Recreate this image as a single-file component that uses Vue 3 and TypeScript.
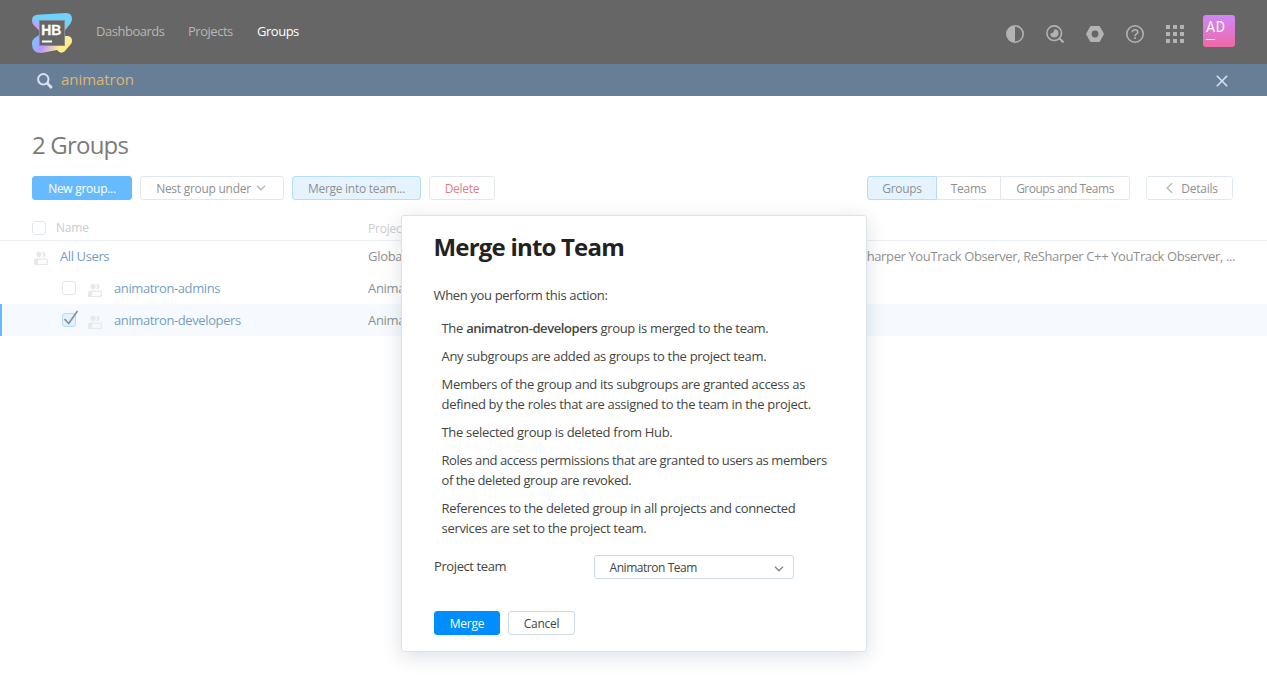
<script setup lang="ts">
interface Row { name: string; project: string; level: number; checked: boolean; roles?: string }

const nav: { label: string; active: boolean }[] = [
  { label: 'Dashboards', active: false },
  { label: 'Projects', active: false },
  { label: 'Groups', active: true },
]
const rows: Row[] = [
  { name: 'All Users', project: 'Global', level: 0, checked: false, roles: 'ReSharper YouTrack Observer, ReSharper C++ YouTrack Observer, ...' },
  { name: 'animatron-admins', project: 'Animatron', level: 1, checked: false },
  { name: 'animatron-developers', project: 'Animatron', level: 1, checked: true },
]
const effects: string[] = [
  'Any subgroups are added as groups to the project team.',
  'Members of the group and its subgroups are granted access as defined by the roles that are assigned to the team in the project.',
  'The selected group is deleted from Hub.',
  'Roles and access permissions that are granted to users as members of the deleted group are revoked.',
  'References to the deleted group in all projects and connected services are set to the project team.',
]
const dots = [0, 7, 14]
</script>

<template>
  <div class="page">
    <header class="header">
      <svg class="logo" width="40" height="40" viewBox="0 0 40 40">
        <defs>
          <linearGradient id="top" x1="0" y1="0.8" x2="0.35" y2="0.2">
            <stop offset="0.1" stop-color="#b04dff" /><stop offset="0.8" stop-color="#0fb4f5" />
          </linearGradient>
          <linearGradient id="bottom" x1="0" y1="0.2" x2="1" y2="0.4">
            <stop offset="0" stop-color="#10a8ff" /><stop offset="0.34" stop-color="#9050ff" /><stop offset="0.75" stop-color="#ffe040" />
          </linearGradient>
        </defs>
        <path d="M5 1.700 L34 0 Q40 0 40 6 Q40 8.500 38.500 10.500 L32 18.500 H8 L1.500 12 Q0 10 0 7 Q0 2.500 5 1.700Z" fill="url(#top)" />
        <path d="M7 22 L8 21 V30 H32 V23 H35 Q40 23 40 28 Q40 30 38.500 31.500 L32.500 38.500 Q29 41 26 38 L25 37 L9 40 Q0 40 0 31 Q0 27 2.500 25Z" fill="url(#bottom)" />
        <rect x="7.500" y="7.500" width="25" height="25" class="logo-box" />
        <rect x="10" y="27.500" width="10" height="2" fill="#fff" />
        <text x="9.300" y="21.500" class="logo-text" textLength="20" lengthAdjust="spacingAndGlyphs">HB</text>
      </svg>
      <nav class="nav">
        <a v-for="n in nav" :key="n.label" :class="['nav-item', n.label.toLowerCase(), { active: n.active }]">{{ n.label }}</a>
      </nav>
      <div class="tools">
        <svg width="18" height="18" viewBox="0 0 18 18"><circle cx="9" cy="9" r="8.200" class="line" /><path d="M9 1a8 8 0 0 0 0 16z" class="solid" /></svg>
        <svg width="18" height="18" viewBox="0 0 18 18"><circle cx="8.200" cy="8.200" r="7.300" class="line" /><path d="M13.300 13.300l4.200 4.200" class="line thick" /><path d="M4.300 8.400c1.600 0 3.500-.3 4.200-4.200a4.100 4.100 0 1 1-4.200 4.200z" class="solid" /></svg>
        <svg width="18" height="18" viewBox="0 0 18 18"><path fill-rule="evenodd" d="M5 1h8q.6 0 .9.500l3.900 6.900q.3.600 0 1.200l-3.900 6.900q-.3.500-.9.500H5q-.6 0-.9-.5L.2 9.600q-.3-.6 0-1.200l3.900-6.900Q4.400 1 5 1zm4 4.600a3.400 3.400 0 1 0 0 6.800a3.400 3.400 0 0 0 0-6.800z" class="solid" /></svg>
        <svg width="18" height="18" viewBox="0 0 18 18"><circle cx="9" cy="9" r="8.200" class="line" /><path d="M6.300 7.200c0-3.400 5.500-3.300 5.500 0c0 1.700-2.800 1.900-2.800 4" class="line" /><path d="M8.100 12.300h1.800v1.800H8.100z" class="solid" /></svg>
        <svg width="18" height="18" viewBox="0 0 18 18"><template v-for="y in dots" :key="y"><rect v-for="x in dots" :key="x" :x="x" :y="y" width="4" height="4" class="solid" /></template></svg>
      </div>
      <div class="avatar"><span>AD</span><i></i></div>
    </header>

    <div class="search">
      <svg class="glass" width="16" height="16" viewBox="0 0 16 16"><circle cx="6.300" cy="6.300" r="5.200" /><path d="M10 10l4.800 5" /></svg>
      <span class="query">animatron</span>
      <svg class="clear" width="12" height="12" viewBox="0 0 12 12"><path d="M.8.800l10.400 10.400M11.200.800L.8 11.200" /></svg>
    </div>

    <main>
      <h1>2 Groups</h1>
      <div class="toolbar">
        <button class="btn primary new"><span>New group...</span></button>
        <button class="btn nest"><span>Nest group under</span><svg width="10" height="6" viewBox="0 0 10 6"><path d="M1 .8l4 4l4-4" /></svg></button>
        <button class="btn selected merge-into"><span>Merge into team...</span></button>
        <button class="btn delete"><span>Delete</span></button>
        <div class="segments">
          <button class="btn selected seg-groups"><span>Groups</span></button>
          <button class="btn seg-teams"><span>Teams</span></button>
          <button class="btn seg-both"><span>Groups and Teams</span></button>
        </div>
        <button class="btn details"><svg width="7" height="12" viewBox="0 0 7 12"><path d="M6 1.200l-4.800 4.800l4.800 4.800" /></svg><span>Details</span></button>
      </div>

      <div class="table">
        <div class="thead">
          <span class="check"></span><span class="th-name">Name</span><span class="th-project">Project</span>
        </div>
        <div v-for="r in rows" :key="r.name" :class="['row', { nested: r.level > 0, chosen: r.checked }]">
          <div class="name-cell">
            <span v-if="r.level > 0" :class="['check', { on: r.checked }]">
              <svg v-if="r.checked" width="17" height="16" viewBox="0 0 17 16"><path d="M1.500 9l4.200 4.500L14.500 1" /></svg>
            </span>
            <svg class="people" width="14" height="14" viewBox="0 0 14 14">
              <circle cx="5" cy="3.400" r="2.600" />
              <path d="M8.200 .9a2.600 2.600 0 1 1 0 5a4 4 0 0 0 0-5z" />
              <path fill-rule="evenodd" d="M0 14V9.500Q0 7.500 2.200 7.500H12Q14 7.500 14 9.500V14zM4 12.800H12.800V10Q12.800 8.800 11.500 8.800H6Q4 8.800 4 11z" />
            </svg>
            <a>{{ r.name }}</a>
          </div>
          <span class="project">{{ r.project }}</span>
          <span v-if="r.roles" class="roles">{{ r.roles }}</span>
        </div>
      </div>
    </main>

    <div class="overlay">
      <section class="dialog">
        <h2><span>Merge into Team</span></h2>
        <p class="intro">When you perform this action:</p>
        <ul>
          <li>The <b>animatron-developers</b> group is merged to the team.</li>
          <li v-for="e in effects" :key="e">{{ e }}</li>
        </ul>
        <div class="field">
          <label>Project team</label>
          <div class="select"><span>Animatron Team</span><svg width="10" height="6" viewBox="0 0 10 6"><path d="M1 .8l4 4l4-4" /></svg></div>
        </div>
        <div class="actions">
          <button class="btn primary ok"><span>Merge</span></button>
          <button class="btn cancel"><span>Cancel</span></button>
        </div>
      </section>
    </div>
  </div>
</template>

<style>
body { margin: 0; overflow: hidden; background: #fff; }
</style>

<style scoped>
* { box-sizing: border-box; }
.page { position: relative; width: 1267px; height: 695px; overflow: hidden; background: #fff; color: #444; font: 13px/20px "Open Sans", "Noto Sans", sans-serif; letter-spacing: -0.3px; white-space: nowrap; }
.header { display: flex; align-items: center; height: 64px; padding: 0 32px; background: #000; }
.logo { margin-top: 2px; }
.logo-box { fill: #000; stroke: #343c46; stroke-width: 1; }
.logo-text { font: bold 14.5px "Liberation Sans", sans-serif; fill: #fff; stroke: #fff; stroke-width: 0.3; letter-spacing: 0; }
.nav { display: flex; gap: 24px; margin-left: 24px; margin-top: -3px; color: #888; letter-spacing: -0.48px; }
.nav-item.dashboards { width: 68px; }
.nav-item.projects { width: 45px; }
.nav-item.active { color: #fff; }
.tools { display: flex; gap: 22px; margin: 4px 19px 0 auto; }
.solid { fill: #808080; }
.line { fill: none; stroke: #808080; stroke-width: 1.6; }
.thick { stroke-width: 2; }
.avatar { width: 32px; height: 32px; margin-top: -2px; padding: 2px 3px; border-radius: 3px; background: linear-gradient(#b037f2, #e60569); color: #fff; font: 14px/20px Roboto, sans-serif; letter-spacing: 0.7px; }
.avatar span { display: block; }
.avatar i { display: block; width: 9px; height: 1px; margin-top: 2px; background: #fff; }

.search { display: flex; align-items: center; height: 32px; padding: 0 39px 0 37px; background: #032a50; }
.glass { margin-top: 1px; fill: none; stroke: #b8d1e5; stroke-width: 2; }
.glass path { stroke-width: 2.8; }
.query { margin: -2px 0 0 8px; color: #c98614; font-size: 15px; letter-spacing: -0.05px; }
.clear { margin: 2px 0 0 auto; fill: none; stroke: #b8d1e5; stroke-width: 1.6; }

h1 { margin: 0; padding: 35px 32px 0; height: 80px; color: #222; font-size: 24px; line-height: 28px; font-weight: 400; letter-spacing: -0.8px; }
.toolbar { display: flex; align-items: center; height: 24px; padding: 0 34px 0 32px; gap: 8px; }
.btn { display: flex; align-items: center; justify-content: center; height: 24px; padding: 0; border: 1px solid #ced9e2; border-radius: 3px; background: #fff; color: #444; font: 12px/20px "Open Sans", sans-serif; letter-spacing: -0.27px; white-space: nowrap; }
.btn span { padding-top: 1px; }
.btn.primary { border-color: #008eff; background: #008eff; color: #fff; font-weight: 500; }
.btn.selected { background: #d4ecff; border-color: #80c6ff; }
.btn svg, .select svg { fill: none; stroke: #888; stroke-width: 1.4; }
.new { width: 100px; }
.nest { width: 144px; gap: 5px; padding-right: 2px; }
.merge-into { width: 129px; }
.delete { width: 66px; color: #c22731; }
.segments { display: flex; margin-left: auto; }
.segments .btn { border-radius: 0; }
.segments .seg-groups { width: 70px; border-radius: 3px 0 0 3px; }
.segments .seg-teams { width: 64px; border-left: 0; }
.segments .seg-both { width: 129px; border-left: 0; border-radius: 0 3px 3px 0; letter-spacing: -0.5px; }
.details { width: 87px; margin-left: 8px; padding-left: 5px; gap: 8px; }

.table { margin-top: 16px; }
.thead { display: flex; align-items: center; height: 25px; padding-left: 32px; border-bottom: 1px solid #dfe5eb; color: #aaa; font-size: 12px; letter-spacing: -0.2px; }
.check { display: block; flex: none; width: 14px; height: 14px; border: 1px solid #ced9e2; border-radius: 3px; background: #fff; }
.th-name { width: 312px; margin-left: 10px; }
.th-project { padding-top: 1px; }
.row { display: flex; align-items: center; height: 32px; padding-left: 34px; }
.table .row:nth-child(2) { height: 31px; padding-bottom: 1px; }
.name-cell { display: flex; align-items: center; width: 334px; }
.nested { padding-left: 62px; }
.nested .name-cell { width: 306px; }
.chosen { background: #f0f7ff; box-shadow: inset 2px 0 #008eff; }
.check.on { position: relative; border-color: #80c6ff; background: #cce8ff; }
.check.on svg { position: absolute; left: 0; top: -4px; fill: none; stroke: #444; stroke-width: 1.700; }
.people { margin-top: 4px; fill: #d9d9d9; }
.nested .people { margin-left: 12px; }
.name-cell a { margin-left: 12px; color: #0f5b99; letter-spacing: -0.39px; }
.roles { margin: 0 32px 0 auto; letter-spacing: -0.38px; }

.overlay { position: absolute; inset: 0; background: rgba(255, 255, 255, 0.4); }
.dialog { position: absolute; left: 401px; top: 215px; width: 466px; height: 437px; padding: 0 32px; border: 1px solid #dbe3ea; border-radius: 3px; background: #fff; box-shadow: 0 4px 20px rgba(0, 42, 76, 0.15); }
h2 { margin: 0 0 0 -0.5px; padding-top: 17px; height: 69px; color: #222; font-size: 24px; line-height: 28px; font-weight: 700; letter-spacing: -0.8px; }
.intro { margin: 0 0 0 -0.5px; letter-spacing: -0.34px; }
ul { margin: 13px 0 0 -0.5px; padding: 0 0 0 8px; list-style: none; white-space: normal; }
li { margin-bottom: 8px; width: 392px; }
li:nth-child(5) { letter-spacing: -0.4px; }
li:nth-child(3) { letter-spacing: -0.3px; }
li b { font-weight: 600; letter-spacing: -0.42px; }
.field { display: flex; margin-top: 17px; height: 24px; }
.field label { width: 160px; margin-top: 1px; letter-spacing: -0.4px; }
.select { display: flex; align-items: center; justify-content: space-between; width: 200px; height: 24px; padding: 1px 9px 0 14.5px; border: 1px solid #ccdae6; border-radius: 3px; font-size: 12px; letter-spacing: -0.45px; }
.select svg { margin-top: 2px; }
.actions { display: flex; gap: 8px; margin-top: 32px; }
.ok { width: 66px; }
.cancel { width: 67px; border-color: #ccdae6; }
</style>
